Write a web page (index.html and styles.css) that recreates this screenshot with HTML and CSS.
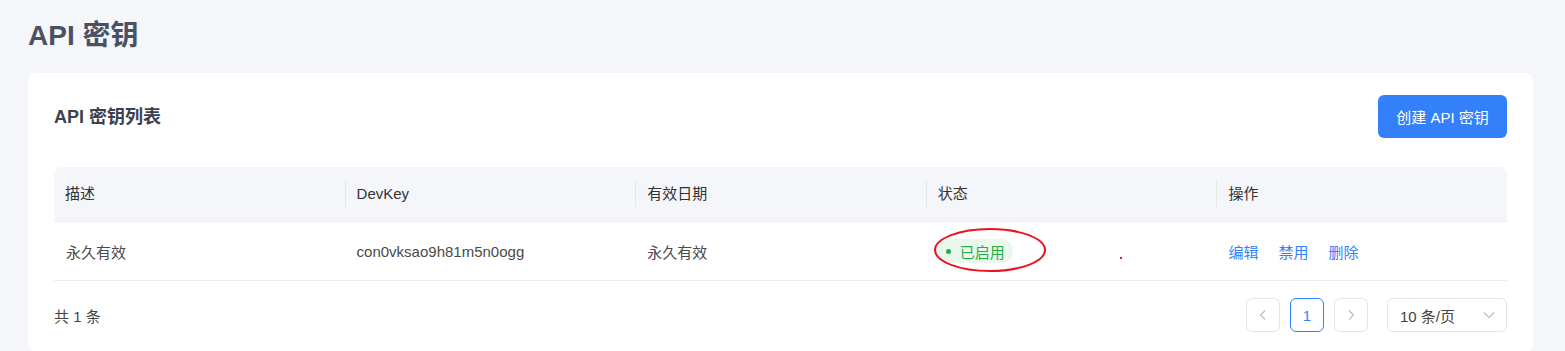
FILE: index.html
```html
<!DOCTYPE html>
<html lang="zh-CN">
<head>
<meta charset="utf-8">
<title>API 密钥</title>
<link rel="stylesheet" href="styles.css">
</head>
<body>
<div class="page">
  <h1 class="page-title">API 密钥</h1>
  <section class="card">
    <div class="card-head">
      <h2 class="card-title">API 密钥列表</h2>
      <button class="btn-primary">创建 API 密钥</button>
    </div>
    <div class="table">
      <div class="thead">
        <div class="th">描述</div>
        <div class="th sep">DevKey</div>
        <div class="th sep">有效日期</div>
        <div class="th sep">状态</div>
        <div class="th sep">操作</div>
      </div>
      <div class="tr">
        <div class="td">永久有效</div>
        <div class="td">con0vksao9h81m5n0ogg</div>
        <div class="td">永久有效</div>
        <div class="td status-cell">
          <span class="tag"><span class="dot"></span>已启用</span>
          <svg class="ring" width="114" height="46" viewBox="0 0 114 46"><ellipse cx="57" cy="23" rx="55" ry="21" fill="none" stroke="#e8141c" stroke-width="2"/></svg>
          <span class="mark"></span>
        </div>
        <div class="td actions"><a>编辑</a><a>禁用</a><a>删除</a></div>
      </div>
    </div>
    <div class="foot">
      <span class="total">共 1 条</span>
      <div class="pager">
        <button class="pg disabled"><svg width="12" height="12" viewBox="0 0 12 12"><path d="M8 1.5 3.5 6 8 10.5" fill="none" stroke="currentColor" stroke-width="1.1"/></svg></button>
        <button class="pg active">1</button>
        <button class="pg disabled"><svg width="12" height="12" viewBox="0 0 12 12"><path d="M4 1.5 8.5 6 4 10.5" fill="none" stroke="currentColor" stroke-width="1.1"/></svg></button>
        <div class="select"><span>10 条/页</span><svg width="14" height="14" viewBox="0 0 14 14"><path d="M2 4.5 7 9.5 12 4.5" fill="none" stroke="currentColor" stroke-width="1.1"/></svg></div>
      </div>
    </div>
  </section>
</div>
</body>
</html>
```
FILE: styles.css
```css
* { box-sizing: border-box; }
html, body { margin: 0; padding: 0; }
body {
  background: #f5f6fa;
  font-family: "Liberation Sans", "Noto Sans CJK SC", sans-serif;
  color: #333;
  font-size: 15px;
}
.page { padding: 16px 32px 0 28px; }
.page-title {
  margin: 0;
  font-size: 28px;
  line-height: 40px;
  font-weight: 700;
  color: #4a5162;
}
.card {
  margin-top: 17px;
  background: #fff;
  border-radius: 8px;
  padding: 22px 26px 20px 26px;
}
.card-head {
  display: flex;
  justify-content: space-between;
  align-items: center;
}
.card-title {
  margin: 0 0 4px 0;
  font-size: 18px;
  font-weight: 700;
  color: #3b4150;
}
.btn-primary {
  height: 43px;
  width: 129px;
  border: 0;
  border-radius: 6px;
  background: #3480fa;
  color: #fff;
  font-family: inherit;
  font-size: 15px;
  padding: 0;
}
.table { margin-top: 29px; }
.thead {
  display: grid;
  grid-template-columns: repeat(5, 1fr);
  height: 55px;
  background: #f5f6fa;
  border-radius: 8px 8px 0 0;
  align-items: center;
  border-bottom: 1px solid #ebeef5;
}
.th {
  padding-left: 11px;
  color: #333;
  height: 26px;
  line-height: 26px;
}
.th.sep { border-left: 1px solid #e4e6ec; }
.tr {
  display: grid;
  grid-template-columns: repeat(5, 1fr);
  height: 59px;
  align-items: center;
  border-bottom: 1px solid #ebeef5;
}
.td { padding-left: 12px; color: #4a4a4a; }
.status-cell { position: relative; padding-left: 10px; }
.tag {
  display: inline-flex;
  align-items: center;
  height: 24px;
  padding: 0 8px 0 10px;
  border-radius: 12px;
  background: #e9f7ec;
  color: #22b045;
}
.dot {
  width: 5px;
  height: 5px;
  border-radius: 50%;
  background: #22b045;
  margin-right: 9px;
}
.ring {
  position: absolute;
  left: 7px;
  top: -12px;
}
.mark {
  position: absolute;
  left: 194px;
  top: 18px;
  width: 2px;
  height: 2px;
  background: #e8141c;
}
.actions { display: flex; gap: 20px; }
.actions a { color: #3480fa; cursor: pointer; }
.foot {
  display: flex;
  justify-content: space-between;
  align-items: center;
  margin-top: 17px;
}
.total { color: #444; }
.pager { display: flex; align-items: center; }
.pg {
  width: 34px;
  height: 34px;
  border: 1px solid #e3e5ea;
  border-radius: 6px;
  background: #fff;
  color: #bbb;
  margin-left: 10px;
  padding: 0;
  display: flex;
  align-items: center;
  justify-content: center;
  font-family: inherit;
  font-size: 15px;
}
.pg.active { border-color: #3480fa; color: #3480fa; }
.select {
  margin-left: 19px;
  width: 120px;
  height: 34px;
  border: 1px solid #e3e5ea;
  border-radius: 6px;
  display: flex;
  align-items: center;
  justify-content: space-between;
  padding: 0 10px 0 12px;
  color: #444;
}
.select svg { color: #bbb; }
```
